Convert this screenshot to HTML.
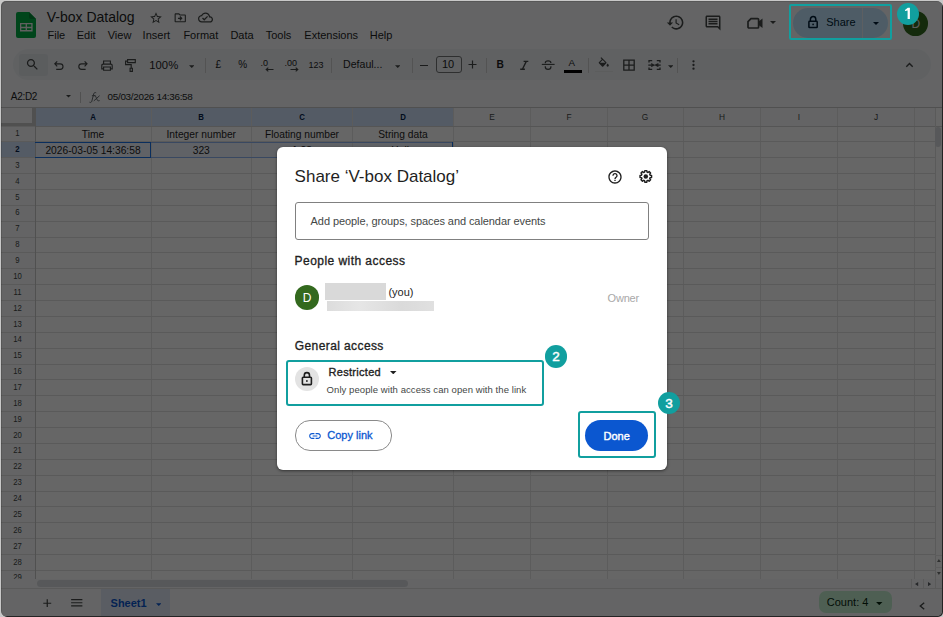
<!DOCTYPE html><html><head><meta charset="utf-8"><style>
html,body{margin:0;padding:0;}
body{width:943px;height:617px;overflow:hidden;position:relative;background:#fff;font-family:"Liberation Sans",sans-serif;}
.t{position:absolute;white-space:nowrap;}
#win{position:absolute;left:0;top:0;width:943px;height:617px;background:#f9fbfd;overflow:hidden;}
</style></head><body>
<div id="win">
<svg style="position:absolute;left:16px;top:12px;" width="20" height="26" viewBox="0 0 20 26"><path d="M0 2a2 2 0 0 1 2-2h11l7 7v17a2 2 0 0 1-2 2H2a2 2 0 0 1-2-2z" fill="#00ad45"/><path d="M13 0l7 7h-5a2 2 0 0 1-2-2z" fill="#008a35"/><path d="M4 11h12.6v8.4H4z M5.3 12.3v2.55h4.35v-2.55z M10.95 12.3v2.55h4.35v-2.55z M5.3 16.15v1.95h4.35v-1.95z M10.95 16.15v1.95h4.35v-1.95z" fill="#f1f1f1" fill-rule="evenodd"/></svg>
<div class="t" style="left:46.7px;top:10.45px;font-size:14px;line-height:14px;color:#1f1f1f;font-weight:400;">V-box Datalog</div>
<svg style="position:absolute;left:149.3px;top:11px;" width="14" height="14" viewBox="0 0 24 24"><path fill="#444746" d="M22 9.24l-7.19-.62L12 2 9.19 8.63 2 9.24l5.46 4.73L5.82 21 12 17.27 18.18 21l-1.63-7.03L22 9.24zM12 15.4l-3.76 2.27 1-4.28-3.32-2.88 4.38-.38L12 6.1l1.71 4.04 4.38.38-3.32 2.88 1 4.28L12 15.4z"/></svg>
<svg style="position:absolute;left:173px;top:10.8px;" width="14.5" height="13.6" viewBox="0 0 24 24"><path fill="#444746" d="M20 6h-8l-2-2H4c-1.1 0-1.99.9-1.99 2L2 18c0 1.1.9 2 2 2h16c1.1 0 2-.9 2-2V8c0-1.1-.9-2-2-2zm0 12H4V6h5.17l2 2H20v10zm-7.84-6H8v2h4.16l-1.59 1.59L11.99 17 16 13.01 11.99 9l-1.41 1.41L12.16 12z"/></svg>
<svg style="position:absolute;left:197.5px;top:9.5px;" width="15" height="15" viewBox="0 0 24 24"><path fill="#444746" d="M19.35 10.04C18.67 6.59 15.64 4 12 4 9.11 4 6.6 5.64 5.35 8.04 2.34 8.36 0 10.91 0 14c0 3.31 2.69 6 6 6h13c2.76 0 5-2.24 5-5 0-2.64-2.05-4.78-4.65-4.96zM19 18H6c-2.21 0-4-1.79-4-4 0-2.05 1.530-3.76 3.56-3.97l1.07-.11.5-.95C8.08 7.14 9.94 6 12 6c2.62 0 4.88 1.86 5.39 4.43l.3 1.5 1.53.11c1.56.1 2.78 1.41 2.78 2.96 0 1.65-1.35 3-3 3zm-9-3.82l-2.09-2.09L6.5 13.5 10 17l6.01-6.01-1.41-1.41z"/></svg>
<div class="t" style="left:47.5px;top:29.79px;font-size:11px;line-height:11px;color:#1f1f1f;font-weight:400;">File</div>
<div class="t" style="left:76.7px;top:29.79px;font-size:11px;line-height:11px;color:#1f1f1f;font-weight:400;">Edit</div>
<div class="t" style="left:107.7px;top:29.79px;font-size:11px;line-height:11px;color:#1f1f1f;font-weight:400;">View</div>
<div class="t" style="left:142.6px;top:29.79px;font-size:11px;line-height:11px;color:#1f1f1f;font-weight:400;">Insert</div>
<div class="t" style="left:183.4px;top:29.79px;font-size:11px;line-height:11px;color:#1f1f1f;font-weight:400;">Format</div>
<div class="t" style="left:230.4px;top:29.79px;font-size:11px;line-height:11px;color:#1f1f1f;font-weight:400;">Data</div>
<div class="t" style="left:265.7px;top:29.79px;font-size:11px;line-height:11px;color:#1f1f1f;font-weight:400;">Tools</div>
<div class="t" style="left:304.29999999999995px;top:29.79px;font-size:11px;line-height:11px;color:#1f1f1f;font-weight:400;">Extensions</div>
<div class="t" style="left:369.7px;top:29.79px;font-size:11px;line-height:11px;color:#1f1f1f;font-weight:400;">Help</div>
<svg style="position:absolute;left:666.3px;top:13px;" width="19" height="19" viewBox="0 0 24 24"><path fill="#444746" d="M13 3c-4.97 0-9 4.03-9 9H1l3.89 3.89.07.14L9 12H6c0-3.87 3.13-7 7-7s7 3.13 7 7-3.13 7-7 7c-1.93 0-3.68-.79-4.94-2.06l-1.42 1.42C8.27 19.99 10.51 21 13 21c4.97 0 9-4.03 9-9s-4.03-9-9-9zm-1 5v5l4.28 2.54.72-1.21-3.5-2.08V8H12z"/></svg>
<svg style="position:absolute;left:703.5px;top:14px;" width="18" height="18" viewBox="0 0 24 24"><path fill="#444746" d="M21.99 4c0-1.1-.89-2-1.99-2H4c-1.1 0-2 .9-2 2v12c0 1.1.9 2 2 2h14l4 4-.01-18zM20 4v13.17L18.83 16H4V4h16zM6 12h12v2H6zm0-3h12v2H6zm0-3h12v2H6z"/></svg>
<svg style="position:absolute;left:745.5px;top:15px;" width="18" height="16" viewBox="0 0 18 16"><path fill="none" stroke="#444746" stroke-width="1.7" d="M5 3.6h6.6a1 1 0 0 1 1 1v7.4a1 1 0 0 1-1 1H3a1 1 0 0 1-1-1V6.6z"/><path fill="#444746" d="M12.6 6.5l3.9-3v9.6l-3.9-3z"/></svg>
<svg style="position:absolute;left:770px;top:21px;" width="6" height="3" viewBox="0 0 6 3"><path fill="#444746" d="M0 0h6L3 3z"/></svg>
<div style="position:absolute;left:793px;top:7.8px;width:95px;height:30.2px;border-radius:15.1px;background:#c2e7ff;"></div>
<div style="position:absolute;left:862.3px;top:7.8px;width:0.8px;height:30.2px;background:#e6eef5;"></div>
<svg style="position:absolute;left:0;top:0" width="943" height="617" viewBox="0 0 943 617" fill="none" stroke="#001d35" stroke-width="1.5"><path d="M810.4 21.2V19.3A2.7 2.7 0 0 1 815.8 19.3V21.2"/><rect x="808.9" y="21.3" width="8.3" height="6.3" rx="0.7"/><circle cx="813.1" cy="24.4" r="0.85" fill="#001d35" stroke="none"/></svg>
<div class="t" style="left:826.2px;top:16.79px;font-size:11px;line-height:11px;color:#001d35;font-weight:400;">Share</div>
<svg style="position:absolute;left:872.5px;top:21.5px;" width="6" height="3" viewBox="0 0 6 3"><path fill="#001d35" d="M0 0h6L3 3z"/></svg>
<div style="position:absolute;left:903px;top:11px;width:24.6px;height:24.6px;border-radius:50%;background:#33691e;"></div>
<div class="t" style="left:911.4px;top:18.34px;font-size:12px;line-height:12px;color:#e8e8e8;font-weight:400;">D</div>
<div style="position:absolute;left:13px;top:49px;width:918px;height:31px;border-radius:15.5px;background:#eff2f6;"></div>
<div style="position:absolute;left:19px;top:54px;width:29px;height:22px;border-radius:3px;background:#e4e8ec;"></div>
<svg style="position:absolute;left:24.9px;top:56.9px;" width="15" height="15" viewBox="0 0 24 24"><path fill="#444746" d="M15.5 14h-.79l-.28-.27C15.41 12.59 16 11.11 16 9.5 16 5.91 13.09 3 9.5 3S3 5.91 3 9.5 5.91 16 9.5 16c1.61 0 3.09-.59 4.23-1.57l.27.28v.79l5 4.99L20.49 19l-4.99-5zm-6 0C7.01 14 5 11.99 5 9.5S7.01 5 9.5 5 14 7.01 14 9.5 11.99 14 9.5 14z"/></svg>
<svg style="position:absolute;left:0;top:0" width="943" height="617" viewBox="0 0 943 617" fill="none" stroke="#444746" stroke-width="1.15">
<path d="M57.2 61.3L54.8 63.8L57.2 66.3M55.1 63.8H60.2A2.8 2.8 0 0 1 60.2 69.4H56.2"/>
<path d="M84.6 61.3L87 63.8L84.6 66.3M86.7 63.8H81.6A2.8 2.8 0 0 0 81.6 69.4H85.6"/>
<path d="M103.6 63.9V61H110.4V63.9"/>
<path d="M103.3 68.8H101.8V65.4A1.3 1.3 0 0 1 103.1 64.1H110.9A1.3 1.3 0 0 1 112.2 65.4V68.8H110.7"/>
<path d="M103.6 67H110.4V70.2H103.6Z"/>
<path d="M127.6 59.6H135.3V62.6H127.6Z"/>
<path d="M127.6 61.1H125.6V64.6H131.2V68.2"/>
<path d="M130.1 68.2H132.4V71.3H130.1Z"/>
</svg>
<div class="t" style="left:149.3px;top:59.63px;font-size:11.3px;line-height:11.3px;color:#1f1f1f;font-weight:400;">100%</div>
<svg style="position:absolute;left:188.8px;top:64.8px;" width="5.5" height="3" viewBox="0 0 6 3"><path fill="#444746" d="M0 0h6L3 3z"/></svg>
<div style="position:absolute;left:204.5px;top:57.5px;width:1px;height:15px;background:#d0d0d0;"></div>
<div class="t" style="left:215.5px;top:60.03px;font-size:10px;line-height:10px;color:#1f1f1f;font-weight:400;">£</div>
<div class="t" style="left:238.2px;top:60.03px;font-size:10px;line-height:10px;color:#1f1f1f;font-weight:400;">%</div>
<div class="t" style="left:260.6px;top:58.98px;font-size:9px;line-height:9px;color:#1f1f1f;font-weight:400;">.0</div>
<svg style="position:absolute;left:265px;top:66.5px;" width="9" height="5" viewBox="0 0 9 5"><path fill="none" stroke="#444746" stroke-width="1.1" d="M8.5 2.5H1.5M3.3 0.7L1.2 2.5 3.3 4.3"/></svg>
<div class="t" style="left:284.5px;top:58.98px;font-size:9px;line-height:9px;color:#1f1f1f;font-weight:400;">.00</div>
<svg style="position:absolute;left:289.5px;top:66.5px;" width="9" height="5" viewBox="0 0 9 5"><path fill="none" stroke="#444746" stroke-width="1.1" d="M0.5 2.5h7M5.7 0.7L7.8 2.5 5.7 4.3"/></svg>
<div class="t" style="left:308.6px;top:60.58px;font-size:9px;line-height:9px;color:#1f1f1f;font-weight:400;">123</div>
<div style="position:absolute;left:331.3px;top:57.5px;width:1px;height:15px;background:#d0d0d0;"></div>
<div class="t" style="left:343px;top:59.23px;font-size:10.6px;line-height:10.6px;color:#1f1f1f;font-weight:400;">Defaul...</div>
<svg style="position:absolute;left:394.7px;top:64.8px;" width="5.5" height="3" viewBox="0 0 6 3"><path fill="#444746" d="M0 0h6L3 3z"/></svg>
<div style="position:absolute;left:411.5px;top:57.5px;width:1px;height:15px;background:#d0d0d0;"></div>
<div style="position:absolute;left:419.5px;top:64.5px;width:8.5px;height:1.2px;background:#444746;"></div>
<div style="position:absolute;left:436px;top:55.7px;width:23.5px;height:15.6px;border:1px solid #747775;border-radius:3px;"></div>
<div class="t" style="left:442px;top:58.89px;font-size:11px;line-height:11px;color:#1f1f1f;font-weight:400;">10</div>
<svg style="position:absolute;left:467.8px;top:60.2px;" width="9" height="9" viewBox="0 0 9 9"><path fill="none" stroke="#444746" stroke-width="1.2" d="M4.5 0.5v8M0.5 4.5h8"/></svg>
<div style="position:absolute;left:485.7px;top:57.5px;width:1px;height:15px;background:#d0d0d0;"></div>
<div class="t" style="left:496.6px;top:60.47px;font-size:10.2px;line-height:10.2px;color:#1f1f1f;font-weight:700;">B</div>
<svg style="position:absolute;left:0;top:0" width="943" height="617" viewBox="0 0 943 617" fill="none" stroke="#444746" stroke-width="1.2">
<path d="M523.6 61.4H528.3M520.2 69.2H524.9M526.3 61.4L522.4 69.2" stroke-width="1.35"/>
<path d="M541.8 64.4H554.6" stroke-width="1.1"/>
<path d="M545.3 63.2V62.9C545.3 61.6 546.4 60.9 548.1 60.9C549.8 60.9 550.9 61.6 550.9 62.9" stroke-width="1.2"/>
<path d="M545.3 66.2V66.9C545.3 68.4 546.5 69.3 548.1 69.3C549.8 69.3 550.9 68.4 550.9 66.9V66.2" stroke-width="1.2"/>
<path d="M623.8 60.2H634.2V70.2H623.8Z M629 60.2V70.2 M623.8 65.2H634.2" stroke-width="1.3"/>
<path d="M652.2 60.7H649V62.6M649 67.4V69.4H652.2M656.8 60.7H660V62.6M660 67.4V69.4H656.8" stroke-width="1.3"/>
<path d="M648.3 65.1H651.5M660.7 65.1H657.5" stroke-width="1.3"/>
</svg>
<div class="t" style="left:568.6px;top:58.3px;font-size:9.8px;line-height:9.8px;color:#1f1f1f;font-weight:400;">A</div>
<div style="position:absolute;left:564px;top:70px;width:17.7px;height:2.5px;background:#000;"></div>
<div style="position:absolute;left:588.3px;top:57.5px;width:1px;height:15px;background:#d0d0d0;"></div>
<svg style="position:absolute;left:596.5px;top:56.5px;" width="13.5" height="11.5" viewBox="0 0 24 20"><path fill="#444746" d="M16.56 8.94L7.62 0 6.21 1.41l2.38 2.38-5.15 5.15a1.49 1.49 0 0 0 0 2.12l5.5 5.5c.29.29.68.44 1.06.44s.77-.15 1.06-.44l5.5-5.5c.59-.58.59-1.53 0-2.12zM5.21 10L10 5.21 14.79 10H5.21zM19 11.5s-2 2.17-2 3.5c0 1.1.9 2 2 2s2-.9 2-2c0-1.33-2-3.5-2-3.5z"/></svg>
<div style="position:absolute;left:595px;top:70.6px;width:18px;height:1.5px;background:#e6e8e8;"></div>
<svg style="position:absolute;left:650.5px;top:63px;" width="4.5" height="4.2" viewBox="0 0 4 4"><path fill="#444746" d="M0 0L4 2L0 4z"/></svg>
<svg style="position:absolute;left:654.3px;top:63px;" width="4.5" height="4.2" viewBox="0 0 4 4"><path fill="#444746" d="M4 0L0 2L4 4z"/></svg>
<svg style="position:absolute;left:667.8px;top:64.8px;" width="5.5" height="3" viewBox="0 0 6 3"><path fill="#444746" d="M0 0h6L3 3z"/></svg>
<div style="position:absolute;left:677.2px;top:57.5px;width:1px;height:15px;background:#d0d0d0;"></div>
<svg style="position:absolute;left:691.5px;top:60px;" width="3" height="10" viewBox="0 0 3 10"><circle cx="1.5" cy="1.3" r="1.15" fill="#444746"/><circle cx="1.5" cy="5" r="1.15" fill="#444746"/><circle cx="1.5" cy="8.7" r="1.15" fill="#444746"/></svg>
<svg style="position:absolute;left:905px;top:62px;" width="9" height="6" viewBox="0 0 9 6"><path fill="none" stroke="#444746" stroke-width="1.4" d="M1.3 4.7L4.5 1.5l3.2 3.2"/></svg>
<div class="t" style="left:10.8px;top:91.73px;font-size:10px;line-height:10px;color:#1f1f1f;font-weight:400;letter-spacing:-0.3px">A2:D2</div>
<svg style="position:absolute;left:66.2px;top:95.3px;" width="5" height="2.6" viewBox="0 0 6 3"><path fill="#444746" d="M0 0h6L3 3z"/></svg>
<div style="position:absolute;left:80.3px;top:91.7px;width:1px;height:11.6px;background:#c7c7c7;"></div>
<svg style="position:absolute;left:0;top:0" width="943" height="617" viewBox="0 0 943 617" fill="none" stroke="#5f6368" stroke-width="0.95"><path d="M96.2 92.8C95.3 92.3 94 92.5 93.7 93.9L91.8 101.3C91.5 102.4 90.4 102.7 89.5 102.2"/><path d="M91.9 95.7H95.6"/><path d="M93.9 95.6C95.2 95.4 95.7 96.3 96.3 97.8L97.2 99.9C97.6 100.8 98.4 101 99.6 100.6M99.6 95.7L93.8 100.9"/></svg>
<div class="t" style="left:107.6px;top:92.02px;font-size:9.9px;line-height:9.9px;color:#1f1f1f;font-weight:400;letter-spacing:-0.3px">05/03/2026 14:36:58</div>
<div style="position:absolute;left:0px;top:107px;width:943px;height:1px;background:#c7c7c7;"></div>
<div style="position:absolute;left:0px;top:108px;width:943px;height:471px;background:#ffffff;"></div>
<div style="position:absolute;left:35px;top:108px;width:899.5px;height:18px;background:#f9fbfd;"></div>
<div style="position:absolute;left:35px;top:108px;width:418.5px;height:18px;background:#d3e3fd;"></div>
<div style="position:absolute;left:0px;top:108px;width:35px;height:18px;background:#f9fbfd;"></div>
<div style="position:absolute;left:32px;top:108px;width:3px;height:18px;background:#c7c7c7;"></div>
<div style="position:absolute;left:0px;top:123px;width:35px;height:3px;background:#c7c7c7;"></div>
<div style="position:absolute;left:0px;top:126px;width:35px;height:453px;background:#f9fbfd;"></div>
<div style="position:absolute;left:0px;top:141.87px;width:35px;height:15.87px;background:#d3e3fd;"></div>
<div style="position:absolute;left:35px;top:141.87px;width:418.5px;height:15.87px;background:rgba(14,101,235,0.06);"></div>
<div style="position:absolute;left:34.5px;top:108px;width:1px;height:471px;background:#e6e6e6;"></div>
<div style="position:absolute;left:150.5px;top:108px;width:1px;height:471px;background:#e6e6e6;"></div>
<div style="position:absolute;left:251.0px;top:108px;width:1px;height:471px;background:#e6e6e6;"></div>
<div style="position:absolute;left:352.0px;top:108px;width:1px;height:471px;background:#e6e6e6;"></div>
<div style="position:absolute;left:453.0px;top:108px;width:1px;height:471px;background:#e6e6e6;"></div>
<div style="position:absolute;left:529.8px;top:108px;width:1px;height:471px;background:#e6e6e6;"></div>
<div style="position:absolute;left:606.7px;top:108px;width:1px;height:471px;background:#e6e6e6;"></div>
<div style="position:absolute;left:683.0px;top:108px;width:1px;height:471px;background:#e6e6e6;"></div>
<div style="position:absolute;left:760.1px;top:108px;width:1px;height:471px;background:#e6e6e6;"></div>
<div style="position:absolute;left:837.0px;top:108px;width:1px;height:471px;background:#e6e6e6;"></div>
<div style="position:absolute;left:913.9px;top:108px;width:1px;height:471px;background:#e6e6e6;"></div>
<div style="position:absolute;left:0px;top:125.5px;width:934.5px;height:1px;background:#e1e1e1;"></div>
<div style="position:absolute;left:0px;top:141.37px;width:934.5px;height:1px;background:#e1e1e1;"></div>
<div style="position:absolute;left:0px;top:157.24px;width:934.5px;height:1px;background:#e1e1e1;"></div>
<div style="position:absolute;left:0px;top:173.11px;width:934.5px;height:1px;background:#e1e1e1;"></div>
<div style="position:absolute;left:0px;top:188.98px;width:934.5px;height:1px;background:#e1e1e1;"></div>
<div style="position:absolute;left:0px;top:204.85px;width:934.5px;height:1px;background:#e1e1e1;"></div>
<div style="position:absolute;left:0px;top:220.72px;width:934.5px;height:1px;background:#e1e1e1;"></div>
<div style="position:absolute;left:0px;top:236.58999999999997px;width:934.5px;height:1px;background:#e1e1e1;"></div>
<div style="position:absolute;left:0px;top:252.45999999999998px;width:934.5px;height:1px;background:#e1e1e1;"></div>
<div style="position:absolute;left:0px;top:268.33px;width:934.5px;height:1px;background:#e1e1e1;"></div>
<div style="position:absolute;left:0px;top:284.2px;width:934.5px;height:1px;background:#e1e1e1;"></div>
<div style="position:absolute;left:0px;top:300.07px;width:934.5px;height:1px;background:#e1e1e1;"></div>
<div style="position:absolute;left:0px;top:315.94px;width:934.5px;height:1px;background:#e1e1e1;"></div>
<div style="position:absolute;left:0px;top:331.81px;width:934.5px;height:1px;background:#e1e1e1;"></div>
<div style="position:absolute;left:0px;top:347.67999999999995px;width:934.5px;height:1px;background:#e1e1e1;"></div>
<div style="position:absolute;left:0px;top:363.54999999999995px;width:934.5px;height:1px;background:#e1e1e1;"></div>
<div style="position:absolute;left:0px;top:379.41999999999996px;width:934.5px;height:1px;background:#e1e1e1;"></div>
<div style="position:absolute;left:0px;top:395.28999999999996px;width:934.5px;height:1px;background:#e1e1e1;"></div>
<div style="position:absolute;left:0px;top:411.15999999999997px;width:934.5px;height:1px;background:#e1e1e1;"></div>
<div style="position:absolute;left:0px;top:427.03px;width:934.5px;height:1px;background:#e1e1e1;"></div>
<div style="position:absolute;left:0px;top:442.9px;width:934.5px;height:1px;background:#e1e1e1;"></div>
<div style="position:absolute;left:0px;top:458.77px;width:934.5px;height:1px;background:#e1e1e1;"></div>
<div style="position:absolute;left:0px;top:474.64px;width:934.5px;height:1px;background:#e1e1e1;"></div>
<div style="position:absolute;left:0px;top:490.51px;width:934.5px;height:1px;background:#e1e1e1;"></div>
<div style="position:absolute;left:0px;top:506.38px;width:934.5px;height:1px;background:#e1e1e1;"></div>
<div style="position:absolute;left:0px;top:522.25px;width:934.5px;height:1px;background:#e1e1e1;"></div>
<div style="position:absolute;left:0px;top:538.12px;width:934.5px;height:1px;background:#e1e1e1;"></div>
<div style="position:absolute;left:0px;top:553.99px;width:934.5px;height:1px;background:#e1e1e1;"></div>
<div style="position:absolute;left:0px;top:569.8599999999999px;width:934.5px;height:1px;background:#e1e1e1;"></div>
<div style="position:absolute;left:35px;top:125.5px;width:908px;height:1px;background:#d5d5d5;"></div>
<div style="position:absolute;left:34.5px;top:108px;width:1px;height:471px;background:#c7c7c7;"></div>
<div class="t" style="left:73.0px;width:40px;text-align:center;top:111.8043px;font-size:9.8px;line-height:9.8px;color:#041e49;font-weight:700;transform:scaleX(0.8)">A</div>
<div class="t" style="left:181.25px;width:40px;text-align:center;top:111.8043px;font-size:9.8px;line-height:9.8px;color:#041e49;font-weight:700;transform:scaleX(0.8)">B</div>
<div class="t" style="left:282.0px;width:40px;text-align:center;top:111.8043px;font-size:9.8px;line-height:9.8px;color:#041e49;font-weight:700;transform:scaleX(0.8)">C</div>
<div class="t" style="left:383.0px;width:40px;text-align:center;top:111.8043px;font-size:9.8px;line-height:9.8px;color:#041e49;font-weight:700;transform:scaleX(0.8)">D</div>
<div class="t" style="left:471.9px;width:40px;text-align:center;top:111.8043px;font-size:9.8px;line-height:9.8px;color:#444746;font-weight:400;transform:scaleX(0.85)">E</div>
<div class="t" style="left:548.75px;width:40px;text-align:center;top:111.8043px;font-size:9.8px;line-height:9.8px;color:#444746;font-weight:400;transform:scaleX(0.85)">F</div>
<div class="t" style="left:625.35px;width:40px;text-align:center;top:111.8043px;font-size:9.8px;line-height:9.8px;color:#444746;font-weight:400;transform:scaleX(0.85)">G</div>
<div class="t" style="left:702.05px;width:40px;text-align:center;top:111.8043px;font-size:9.8px;line-height:9.8px;color:#444746;font-weight:400;transform:scaleX(0.85)">H</div>
<div class="t" style="left:779.05px;width:40px;text-align:center;top:111.8043px;font-size:9.8px;line-height:9.8px;color:#444746;font-weight:400;transform:scaleX(0.85)">I</div>
<div class="t" style="left:855.95px;width:40px;text-align:center;top:111.8043px;font-size:9.8px;line-height:9.8px;color:#444746;font-weight:400;transform:scaleX(0.85)">J</div>
<div class="t" style="left:0;width:35px;text-align:center;top:129.0665px;font-size:9px;line-height:9px;color:#444746;font-weight:400;transform:scaleX(0.86)">1</div>
<div class="t" style="left:0;width:35px;text-align:center;top:144.9365px;font-size:9px;line-height:9px;color:#041e49;font-weight:700;transform:scaleX(0.86)">2</div>
<div class="t" style="left:0;width:35px;text-align:center;top:160.8065px;font-size:9px;line-height:9px;color:#444746;font-weight:400;transform:scaleX(0.86)">3</div>
<div class="t" style="left:0;width:35px;text-align:center;top:176.6765px;font-size:9px;line-height:9px;color:#444746;font-weight:400;transform:scaleX(0.86)">4</div>
<div class="t" style="left:0;width:35px;text-align:center;top:192.54649999999998px;font-size:9px;line-height:9px;color:#444746;font-weight:400;transform:scaleX(0.86)">5</div>
<div class="t" style="left:0;width:35px;text-align:center;top:208.41649999999998px;font-size:9px;line-height:9px;color:#444746;font-weight:400;transform:scaleX(0.86)">6</div>
<div class="t" style="left:0;width:35px;text-align:center;top:224.2865px;font-size:9px;line-height:9px;color:#444746;font-weight:400;transform:scaleX(0.86)">7</div>
<div class="t" style="left:0;width:35px;text-align:center;top:240.15649999999997px;font-size:9px;line-height:9px;color:#444746;font-weight:400;transform:scaleX(0.86)">8</div>
<div class="t" style="left:0;width:35px;text-align:center;top:256.0265px;font-size:9px;line-height:9px;color:#444746;font-weight:400;transform:scaleX(0.86)">9</div>
<div class="t" style="left:0;width:35px;text-align:center;top:271.8965px;font-size:9px;line-height:9px;color:#444746;font-weight:400;transform:scaleX(0.86)">10</div>
<div class="t" style="left:0;width:35px;text-align:center;top:287.7665px;font-size:9px;line-height:9px;color:#444746;font-weight:400;transform:scaleX(0.86)">11</div>
<div class="t" style="left:0;width:35px;text-align:center;top:303.6365px;font-size:9px;line-height:9px;color:#444746;font-weight:400;transform:scaleX(0.86)">12</div>
<div class="t" style="left:0;width:35px;text-align:center;top:319.5065px;font-size:9px;line-height:9px;color:#444746;font-weight:400;transform:scaleX(0.86)">13</div>
<div class="t" style="left:0;width:35px;text-align:center;top:335.3765px;font-size:9px;line-height:9px;color:#444746;font-weight:400;transform:scaleX(0.86)">14</div>
<div class="t" style="left:0;width:35px;text-align:center;top:351.24649999999997px;font-size:9px;line-height:9px;color:#444746;font-weight:400;transform:scaleX(0.86)">15</div>
<div class="t" style="left:0;width:35px;text-align:center;top:367.1165px;font-size:9px;line-height:9px;color:#444746;font-weight:400;transform:scaleX(0.86)">16</div>
<div class="t" style="left:0;width:35px;text-align:center;top:382.9865px;font-size:9px;line-height:9px;color:#444746;font-weight:400;transform:scaleX(0.86)">17</div>
<div class="t" style="left:0;width:35px;text-align:center;top:398.8565px;font-size:9px;line-height:9px;color:#444746;font-weight:400;transform:scaleX(0.86)">18</div>
<div class="t" style="left:0;width:35px;text-align:center;top:414.7265px;font-size:9px;line-height:9px;color:#444746;font-weight:400;transform:scaleX(0.86)">19</div>
<div class="t" style="left:0;width:35px;text-align:center;top:430.5965px;font-size:9px;line-height:9px;color:#444746;font-weight:400;transform:scaleX(0.86)">20</div>
<div class="t" style="left:0;width:35px;text-align:center;top:446.4665px;font-size:9px;line-height:9px;color:#444746;font-weight:400;transform:scaleX(0.86)">21</div>
<div class="t" style="left:0;width:35px;text-align:center;top:462.3365px;font-size:9px;line-height:9px;color:#444746;font-weight:400;transform:scaleX(0.86)">22</div>
<div class="t" style="left:0;width:35px;text-align:center;top:478.2065px;font-size:9px;line-height:9px;color:#444746;font-weight:400;transform:scaleX(0.86)">23</div>
<div class="t" style="left:0;width:35px;text-align:center;top:494.0765px;font-size:9px;line-height:9px;color:#444746;font-weight:400;transform:scaleX(0.86)">24</div>
<div class="t" style="left:0;width:35px;text-align:center;top:509.94649999999996px;font-size:9px;line-height:9px;color:#444746;font-weight:400;transform:scaleX(0.86)">25</div>
<div class="t" style="left:0;width:35px;text-align:center;top:525.8164999999999px;font-size:9px;line-height:9px;color:#444746;font-weight:400;transform:scaleX(0.86)">26</div>
<div class="t" style="left:0;width:35px;text-align:center;top:541.6864999999999px;font-size:9px;line-height:9px;color:#444746;font-weight:400;transform:scaleX(0.86)">27</div>
<div class="t" style="left:0;width:35px;text-align:center;top:557.5564999999999px;font-size:9px;line-height:9px;color:#444746;font-weight:400;transform:scaleX(0.86)">28</div>
<div class="t" style="left:0;width:35px;text-align:center;top:573.4264999999998px;font-size:9px;line-height:9px;color:#444746;font-weight:400;transform:scaleX(0.86)">29</div>
<div class="t" style="left:35px;width:116px;text-align:center;top:130.158375px;font-size:10.25px;line-height:10.25px;color:#1f1f1f">Time</div>
<div class="t" style="left:151px;width:100.5px;text-align:center;top:130.158375px;font-size:10.25px;line-height:10.25px;color:#1f1f1f">Integer number</div>
<div class="t" style="left:251.5px;width:101.0px;text-align:center;top:130.158375px;font-size:10.25px;line-height:10.25px;color:#1f1f1f">Floating number</div>
<div class="t" style="left:352.5px;width:101.0px;text-align:center;top:130.158375px;font-size:10.25px;line-height:10.25px;color:#1f1f1f">String data</div>
<div class="t" style="left:35px;width:116px;text-align:center;top:146.028375px;font-size:10.25px;line-height:10.25px;color:#1f1f1f">2026-03-05 14:36:58</div>
<div class="t" style="left:151px;width:100.5px;text-align:center;top:146.028375px;font-size:10.25px;line-height:10.25px;color:#1f1f1f">323</div>
<div class="t" style="left:251.5px;width:101.0px;text-align:center;top:146.028375px;font-size:10.25px;line-height:10.25px;color:#1f1f1f">1.23</div>
<div class="t" style="left:352.5px;width:101.0px;text-align:center;top:146.028375px;font-size:10.25px;line-height:10.25px;color:#1f1f1f">Hello</div>
<div style="position:absolute;left:151px;top:141.9px;width:301px;height:1.1px;background:#8fb4f2;"></div>
<div style="position:absolute;left:151px;top:156.9px;width:301px;height:1.1px;background:#8fb4f2;"></div>
<div style="position:absolute;left:35px;top:141.9px;width:116px;height:1.3px;background:#1a73e8;"></div>
<div style="position:absolute;left:35px;top:156.8px;width:116px;height:1.3px;background:#1a73e8;"></div>
<div style="position:absolute;left:149.7px;top:141.9px;width:1.4px;height:16.2px;background:#1a73e8;"></div>
<div style="position:absolute;left:451.9px;top:141.9px;width:1.3px;height:16.2px;background:#1a73e8;"></div>
<div style="position:absolute;left:0px;top:579px;width:943px;height:10px;background:#f9fbfd;"></div>
<div style="position:absolute;left:0px;top:588px;width:943px;height:1px;background:#e1e1e1;"></div>
<div style="position:absolute;left:37px;top:580px;width:371px;height:7px;border-radius:3.5px;background:#dadce0;"></div>
<div style="position:absolute;left:910.9px;top:578.5px;width:0.9px;height:10px;background:#e1e1e1;"></div>
<div style="position:absolute;left:923.2px;top:578.5px;width:0.9px;height:10px;background:#e1e1e1;"></div>
<svg style="position:absolute;left:915.4px;top:581.5px;" width="3.2" height="4.2" viewBox="0 0 3 4"><path fill="#5f6368" d="M3 0v4L0 2z"/></svg>
<svg style="position:absolute;left:928.2px;top:581.5px;" width="3.2" height="4.2" viewBox="0 0 3 4"><path fill="#5f6368" d="M0 0v4l3-2z"/></svg>
<div style="position:absolute;left:934.5px;top:108px;width:0.9px;height:480px;background:#e1e1e1;"></div>
<div style="position:absolute;left:934.5px;top:555.2px;width:9px;height:0.8px;background:#e8e8e8;"></div>
<div style="position:absolute;left:934.5px;top:567px;width:9px;height:0.8px;background:#e8e8e8;"></div>
<div style="position:absolute;left:935px;top:127.2px;width:6.2px;height:19.5px;border-radius:3.1px;background:#dadce0;"></div>
<svg style="position:absolute;left:936.8px;top:559px;" width="3.8" height="3" viewBox="0 0 4 3"><path fill="#747775" d="M0 3h4L2 0z"/></svg>
<svg style="position:absolute;left:936.8px;top:571.8px;" width="3.8" height="3" viewBox="0 0 4 3"><path fill="#747775" d="M0 0h4L2 3z"/></svg>
<svg style="position:absolute;left:43px;top:598.5px;" width="8.5" height="8.5" viewBox="0 0 9 9"><path fill="none" stroke="#444746" stroke-width="1.3" d="M4.5 0.3v8.4M0.3 4.5h8.4"/></svg>
<svg style="position:absolute;left:71px;top:599.3px;" width="11.5" height="7.5" viewBox="0 0 12 8"><path fill="none" stroke="#444746" stroke-width="1.3" d="M0 0.7h12M0 4h12M0 7.3h12"/></svg>
<div style="position:absolute;left:101.4px;top:589px;width:68.3px;height:27px;background:#e1e9f7;"></div>
<div class="t" style="left:110.6px;top:597.99px;font-size:11px;line-height:11px;color:#0b57d0;font-weight:700;letter-spacing:-0.02px">Sheet1</div>
<svg style="position:absolute;left:155.8px;top:602.7px;" width="5.5" height="3" viewBox="0 0 6 3"><path fill="#0b57d0" d="M0 0h6L3 3z"/></svg>
<div style="position:absolute;left:818.8px;top:591.2px;width:73.2px;height:22.3px;border-radius:7px;background:#c4eed0;"></div>
<div class="t" style="left:826.8px;top:596.99px;font-size:11px;line-height:11px;color:#072711;font-weight:400;">Count: 4</div>
<svg style="position:absolute;left:876px;top:601.6px;" width="6.5" height="3.2" viewBox="0 0 6 3"><path fill="#072711" d="M0 0h6L3 3z"/></svg>
<svg style="position:absolute;left:919px;top:601.5px;" width="6" height="8" viewBox="0 0 6 8"><path fill="none" stroke="#444746" stroke-width="1.4" d="M5.2 0.7L1.3 4l3.9 3.3"/></svg>
</div>
<div style="position:absolute;left:0;top:0;width:943px;height:617px;background:rgba(0,0,0,0.6);"></div>
<div style="position:absolute;left:789px;top:3.8px;width:98.5px;height:32.5px;border:2px solid #119f9f;border-radius:2px;"></div>
<div style="position:absolute;left:277px;top:147px;width:390px;height:323px;border-radius:6px;background:#fff;box-shadow:0 1px 2px rgba(0,0,0,0.3),0 1px 3px 1px rgba(0,0,0,0.15);"></div>
<div class="t" style="left:294.6px;top:168.11px;font-size:17px;line-height:17px;color:#1f1f1f;font-weight:400;">Share ‘V-box Datalog’</div>
<svg style="position:absolute;left:607.4px;top:168.8px;" width="16" height="16" viewBox="0 0 24 24"><path fill="#1f1f1f" d="M11 18h2v-2h-2v2zm1-16C6.48 2 2 6.48 2 12s4.48 10 10 10 10-4.48 10-10S17.52 2 12 2zm0 18c-4.41 0-8-3.59-8-8s3.59-8 8-8 8 3.59 8 8-3.59 8-8 8zm0-14c-2.21 0-4 1.79-4 4h2c0-1.1.9-2 2-2s2 .9 2 2c0 2-3 1.75-3 5h2c0-2.25 3-2.5 3-5 0-2.21-1.79-4-4-4z"/></svg>
<svg style="position:absolute;left:0;top:0" width="943" height="617" viewBox="0 0 943 617"><path d="M649.96 174.68 L650.14 175.20 L651.56 175.39 L651.56 177.41 L650.14 177.60 L649.96 178.12 L649.72 178.62 L650.59 179.76 L649.16 181.19 L648.02 180.32 L647.52 180.56 L647.00 180.74 L646.81 182.16 L644.79 182.16 L644.60 180.74 L644.08 180.56 L643.58 180.32 L642.44 181.19 L641.01 179.76 L641.88 178.62 L641.64 178.12 L641.46 177.60 L640.04 177.41 L640.04 175.39 L641.46 175.20 L641.64 174.68 L641.88 174.18 L641.01 173.04 L642.44 171.61 L643.58 172.48 L644.08 172.24 L644.60 172.06 L644.79 170.64 L646.81 170.64 L647.00 172.06 L647.52 172.24 L648.02 172.48 L649.16 171.61 L650.59 173.04 L649.72 174.18Z" fill="none" stroke="#1f1f1f" stroke-width="1.45" stroke-linejoin="round"/><circle cx="645.8" cy="176.4" r="2.25" fill="#1f1f1f"/></svg>
<div style="position:absolute;left:295px;top:202px;width:351.7px;height:35.5px;border:1px solid #808080;border-radius:3px;"></div>
<div class="t" style="left:310.6px;top:215.99px;font-size:11px;line-height:11px;color:#444746;font-weight:400;letter-spacing:-0.08px">Add people, groups, spaces and calendar events</div>
<div class="t" style="left:294.6px;top:254.84px;font-size:12px;line-height:12px;color:#1f1f1f;font-weight:400;letter-spacing:0.45px;-webkit-text-stroke:0.35px #1f1f1f">People with access</div>
<div style="position:absolute;left:294.8px;top:285.3px;width:24.3px;height:24.3px;border-radius:50%;background:#33691e;"></div>
<div class="t" style="left:302.8px;top:291.64px;font-size:12px;line-height:12px;color:#fff;font-weight:400;">D</div>
<div style="position:absolute;left:325px;top:283.3px;width:61px;height:16.3px;background:#d9d9d9;"></div>
<div class="t" style="left:388.4px;top:286.69px;font-size:11px;line-height:11px;color:#1f1f1f;font-weight:400;">(you)</div>
<div style="position:absolute;left:327px;top:301px;width:106.5px;height:9.8px;background:linear-gradient(90deg,#dcdcdc,#e6e6e6 30%,#dadada 70%,#e0e0e0);"></div>
<div class="t" style="left:607.6px;top:292.89px;font-size:11px;line-height:11px;color:#a8a8a8;font-weight:400;letter-spacing:-0.2px">Owner</div>
<div class="t" style="left:294.8px;top:340.04px;font-size:12px;line-height:12px;color:#1f1f1f;font-weight:400;letter-spacing:0.4px;-webkit-text-stroke:0.35px #1f1f1f">General access</div>
<div style="position:absolute;left:286.3px;top:360.3px;width:253.5px;height:41.6px;border:2px solid #119f9f;border-radius:3px;"></div>
<div style="position:absolute;left:294.9px;top:366.5px;width:24.2px;height:24.2px;border-radius:50%;background:#e3e3e3;"></div>
<svg style="position:absolute;left:0;top:0" width="943" height="617" viewBox="0 0 943 617" fill="none" stroke="#1f1f1f" stroke-width="1.6"><path d="M304.3 377.2V375.2A2.6 2.6 0 0 1 309.5 375.2V377.2"/><rect x="302.4" y="377.3" width="9" height="7.3" rx="0.8"/><circle cx="306.9" cy="381" r="0.9" fill="#1f1f1f" stroke="none"/></svg>
<div class="t" style="left:328.5px;top:366.59px;font-size:11px;line-height:11px;color:#1f1f1f;font-weight:400;letter-spacing:0.3px;-webkit-text-stroke:0.35px #1f1f1f">Restricted</div>
<svg style="position:absolute;left:390.3px;top:370.6px;" width="6.5" height="3.4" viewBox="0 0 6 3"><path fill="#1f1f1f" d="M0 0h6L3 3z"/></svg>
<div class="t" style="left:326.6px;top:385.16px;font-size:9.5px;line-height:9.5px;color:#444746;font-weight:400;letter-spacing:0.07px">Only people with access can open with the link</div>
<div style="position:absolute;left:294.8px;top:420.2px;width:95.6px;height:28.6px;border:1px solid #8a8a8a;border-radius:15px;"></div>
<svg style="position:absolute;left:307.5px;top:429px;" width="14" height="14" viewBox="0 0 24 24"><path fill="#0b57d0" d="M3.9 12c0-1.71 1.39-3.1 3.1-3.1h4V7H7c-2.76 0-5 2.24-5 5s2.24 5 5 5h4v-1.9H7c-1.71 0-3.1-1.39-3.1-3.1zM8 13h8v-2H8v2zm9-6h-4v1.9h4c1.71 0 3.1 1.39 3.1 3.1s-1.39 3.1-3.1 3.1h-4V17h4c2.76 0 5-2.24 5-5s-2.24-5-5-5z"/></svg>
<div class="t" style="left:327.2px;top:429.99px;font-size:11px;line-height:11px;color:#0b57d0;font-weight:400;letter-spacing:0.02px;-webkit-text-stroke:0.3px #0b57d0">Copy link</div>
<div style="position:absolute;left:578.2px;top:411.1px;width:74px;height:42.6px;border:2px solid #119f9f;border-radius:3px;"></div>
<div style="position:absolute;left:585.4px;top:420.1px;width:62.8px;height:30.9px;border-radius:15.5px;background:#0b57d0;"></div>
<div class="t" style="left:603.5px;top:430.59px;font-size:11px;line-height:11px;color:#fff;font-weight:400;-webkit-text-stroke:0.4px #fff">Done</div>
<div style="position:absolute;left:896.7px;top:2.5px;width:22.6px;height:22.6px;border-radius:50%;background:#119f9f;"></div>
<svg style="position:absolute;left:0;top:0" width="943" height="617" viewBox="0 0 943 617"><path fill="#fff" d="M905 10.0L907.8 7.800000000000001H909.9 V18.9H907.6V10.5L905 11.05Z"/></svg>
<div style="position:absolute;left:544.7px;top:345.3px;width:22.6px;height:22.6px;border-radius:50%;background:#119f9f;"></div>
<div class="t" style="left:544.7px;width:22.6px;text-align:center;top:350.07225px;font-size:13.5px;line-height:13.5px;color:#fff;font-weight:400;-webkit-text-stroke:0.45px #fff">2</div>
<div style="position:absolute;left:657.8000000000001px;top:391.9px;width:22.6px;height:22.6px;border-radius:50%;background:#119f9f;"></div>
<div class="t" style="left:657.8000000000001px;width:22.6px;text-align:center;top:396.67224999999996px;font-size:13.5px;line-height:13.5px;color:#fff;font-weight:400;-webkit-text-stroke:0.45px #fff">3</div>
<div style="position:absolute;left:1px;top:1px;width:941px;height:615px;border-radius:5px;box-shadow:1px 1px 0 0 #242424, 0 0 0 40px #c8c8c8, inset 1px 1px 0 rgba(0,0,0,0.13);pointer-events:none;"></div>
</body></html>
